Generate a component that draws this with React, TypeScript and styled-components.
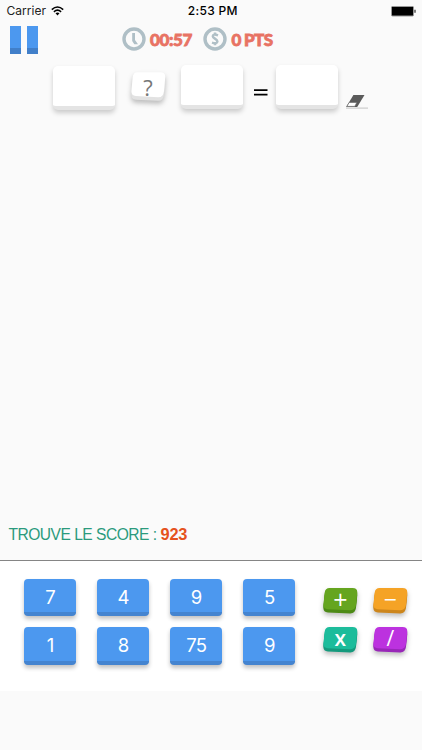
import React from 'react';
import styled, { createGlobalStyle } from 'styled-components';

const GlobalStyle = createGlobalStyle`
  * { box-sizing: border-box; }
  body { margin: 0; background: #fafafa; }
`;

const Screen = styled.main`
  display: flex;
  flex-direction: column;
  width: 422px;
  height: 750px;
  padding-bottom: 59px;
  overflow: hidden;
  background: #fafafa;
  font-family: 'Liberation Sans', sans-serif;
`;

const StatusBar = styled.header`
  display: grid;
  grid-template-columns: 1fr auto 1fr;
  align-items: center;
  height: 22px;
  padding: 0 6px 0 6.5px;
  color: #222;
  font: 400 12px/22px Inter, sans-serif;
`;

const Carrier = styled.div`
  display: flex;
  align-items: center;
  gap: 4.5px;
  letter-spacing: 0.05px;
`;

const Time = styled.time`
  padding-left: 3px;
  font-weight: 500;
  letter-spacing: 0.3px;
  color: #000;
`;

const Battery = styled.svg`
  justify-self: end;
`;

const Hud = styled.section`
  display: flex;
  align-items: flex-start;
  height: 38px;
  padding: 4px 0 0 9.5px;
`;

const PauseButton = styled.button`
  display: flex;
  gap: 6.5px;
  width: 29px;
  margin: 0 83px 0 0;
  padding: 0;
  border: 0;
  background: none;
`;

const PauseBar = styled.span`
  width: 11px;
  height: 28px;
  background: #4c98ef;
  border-bottom: 6px solid #417fc9;
`;

const Stat = styled.div<{ $width: number }>`
  display: flex;
  align-items: center;
  gap: 4.5px;
  width: ${({ $width }) => $width}px;
  height: 26px;
  color: #e87364;
`;

const StatIcon = styled.svg`
  flex: none;
`;

const StatText = styled.span<{ $spacing: number }>`
  padding-top: 2px;
  font: 900 17px/26px Lato, sans-serif;
  letter-spacing: ${({ $spacing }) => $spacing}px;
  -webkit-text-stroke: 0.8px #e87364;
  white-space: nowrap;
`;

const Equation = styled.section`
  display: flex;
  align-items: flex-start;
  height: 60px;
  padding: 5px 0 0 53px;
`;

const Slot = styled.div<{ $raise?: number }>`
  width: 61.5px;
  height: 44px;
  margin-top: ${({ $raise = 0 }) => 0.5 - $raise}px;
  border-radius: 5px;
  border-bottom: 4px solid #e4e4e4;
  background: #fff;
  box-shadow: 0 3px 5px rgba(0, 0, 0, 0.19);
`;

const OperatorSlot = styled.div`
  margin: 6px 13px 0 15.5px;
`;

const EqualSign = styled.svg`
  margin: 24px 8px 0 11.5px;
`;

const Eraser = styled.svg`
  margin: 29px 0 0 7.5px;
`;

const Board = styled.section`
  flex: 1;
`;

const Goal = styled.p`
  display: flex;
  height: 40px;
  margin: 0;
  padding-left: 8.5px;
  color: #2b9a7d;
  font-size: 15.6px;
  line-height: 29px;
  letter-spacing: -0.52px;
  white-space: pre;
`;

const GoalValue = styled.strong`
  margin-left: 4px;
  color: #e5521d;
  font-size: 16.4px;
  letter-spacing: -0.2px;
`;

const Panel = styled.section`
  display: flex;
  height: 131px;
  padding: 17.5px 0 0 24px;
  border-top: 1px solid #858585;
  background: #fff;
`;

const NumberGrid = styled.div`
  display: grid;
  grid-template-columns: repeat(4, 52px);
  grid-auto-rows: 37.5px;
  gap: 11px 21.1px;
  margin-right: 27px;
`;

const NumberKey = styled.button`
  padding: 3px 0 0;
  border: 0;
  border-radius: 4px;
  border-bottom: 4px solid #4484d0;
  background: #4c98ef;
  box-shadow: 0 3px 4px rgba(0, 0, 0, 0.24);
  color: #fff;
  font: 400 18.5px/30px Inter, sans-serif;
  letter-spacing: -0.8px;
`;

const OperatorGrid = styled.div`
  display: grid;
  grid-template-columns: repeat(2, 38px);
  grid-auto-rows: 33px;
  gap: 6px 12px;
  padding-top: 8px;
`;

const Tile = styled.span`
  display: grid;
  width: 38px;
  height: 33px;
`;

const TileShape = styled.svg`
  grid-area: 1 / 1;
  overflow: visible;
  filter: drop-shadow(0 3px 2.5px rgba(0, 0, 0, 0.25));
`;

const TileLabel = styled.span<{ $color: string; $size: number; $shift: number; $weight: number }>`
  grid-area: 1 / 1;
  z-index: 1;
  width: 36px;
  padding-top: ${({ $shift }) => $shift}px;
  color: ${({ $color }) => $color};
  font: ${({ $weight }) => $weight} ${({ $size }) => $size}px/24px 'Open Sans', sans-serif;
  text-align: center;
`;

const OperatorButton = styled.button`
  padding: 0;
  border: 0;
  background: none;
`;

interface SkewTileProps {
  label: string;
  face: string;
  edge: string;
  ink?: string;
  size?: number;
  shift?: number;
  stretch?: number;
  weight?: number;
}

function SkewTile({ label, face, edge, ink = '#fff', size = 23, shift = 0, stretch = 1, weight = 400 }: SkewTileProps) {
  const outline = 'M7.6 1H30.6Q35.8 1 35.2 6L34 17.6Q33.3 23.3 28.2 23.2L5.8 22.2Q.9 21.9 1.5 17L2.7 5.6Q3.2 1 7.6 1Z';
  return (
    <Tile>
      <TileShape width="38" height="33" viewBox="0 0 38 33" aria-hidden="true">
        <g transform={`scale(1 ${stretch})`}>
          <path d={outline} fill={edge} transform="translate(0 3.2)" />
          <path d={outline} fill={edge} transform="translate(0 1.5)" />
          <path d={outline} fill={face} />
        </g>
      </TileShape>
      <TileLabel $color={ink} $size={size} $shift={shift} $weight={weight}>{label}</TileLabel>
    </Tile>
  );
}

const numbers = [7, 4, 9, 5, 1, 8, 75, 9];
const operators: SkewTileProps[] = [
  { label: '+', face: '#65a51f', edge: '#4d8a16', size: 25 },
  { label: '−', face: '#f5a326', edge: '#cd861c', size: 23 },
  { label: 'x', face: '#1cbc9b', edge: '#159a7d', size: 21, shift: -2, weight: 600 },
  { label: '/', face: '#bc32df', edge: '#9927b8', size: 21, shift: 0.5 },
];

export default function App() {
  return (
    <>
      <GlobalStyle />
      <Screen>
        <StatusBar>
          <Carrier>
            Carrier
            <svg width="13" height="10" viewBox="0 0 13 10" aria-label="Wi-Fi">
              <g fill="none" stroke="#000" strokeWidth="1.6">
                <path d="M.8 3.6Q6.5-1.6 12.2 3.6" />
                <path d="M2.9 5.8Q6.5 2.6 10.1 5.8" />
              </g>
              <path d="M4.5 7.3Q6.5 5.7 8.5 7.3L6.5 9.5Z" />
            </svg>
          </Carrier>
          <Time>2:53 PM</Time>
          <Battery width="25" height="11" viewBox="0 0 25 11" aria-label="Battery">
            <rect x=".5" y=".5" width="22" height="9.5" rx="1" fill="#000" stroke="#999" />
            <path d="M23.5 3.8h1v3h-1z" />
          </Battery>
        </StatusBar>
        <Hud>
          <PauseButton aria-label="Pause">
            <PauseBar />
            <PauseBar />
          </PauseButton>
          <Stat $width={81.5}>
            <StatIcon width="24" height="24" viewBox="0 0 24 24" aria-hidden="true">
              <circle cx="12" cy="12" r="10" fill="none" stroke="#afbfc6" strokeWidth="3.4" />
              <path d="M10.2 6H13v7l3 4.3h-3.7L10.2 14Z" fill="#afbfc6" />
            </StatIcon>
            <StatText $spacing={-0.35}>00:57</StatText>
          </Stat>
          <Stat $width={80}>
            <StatIcon width="24" height="24" viewBox="0 0 24 24" aria-hidden="true">
              <circle cx="12" cy="12" r="10" fill="none" stroke="#afbfc6" strokeWidth="3.4" />
              <path d="M15 8.4Q9.8 6.4 9.8 9.3C9.8 11.4 14.4 11.8 14.4 14.4Q14.2 17.2 9 15.6M12 5.6v2M12 16.2v2" fill="none" stroke="#afbfc6" strokeWidth="2.5" />
            </StatIcon>
            <StatText $spacing={-0.65}>0 PTS</StatText>
          </Stat>
        </Hud>
        <Equation>
          <Slot />
          <OperatorSlot>
            <SkewTile label="?" face="#fff" edge="#e2e2e2" ink="#777" size={22} shift={3.5} stretch={1.13} />
          </OperatorSlot>
          <Slot $raise={0.5} />
          <EqualSign width="14" height="7" viewBox="0 0 14 7" aria-label="=">
            <path d="M0 1.2h13.5M0 5.6h13.5" stroke="#000" strokeWidth="1.7" />
          </EqualSign>
          <Slot $raise={0.5} />
          <Eraser width="24" height="15" viewBox="0 0 24 15" aria-label="Effacer">
            <path d="M8.4 1H19.5L12.2 13H1.2Z" fill="#5b5b5b" />
            <path d="M4.2 8.4H11.8L9.8 12.4H1.8Z" fill="#fff" stroke="#5b5b5b" strokeWidth=".6" />
            <path d="M1 14.1H23" stroke="#bbb" strokeWidth=".9" />
          </Eraser>
        </Equation>
        <Board />
        <Goal>TROUVE LE SCORE :<GoalValue>923</GoalValue></Goal>
        <Panel>
          <NumberGrid>
            {numbers.map((value, index) => (
              <NumberKey key={index}>{value}</NumberKey>
            ))}
          </NumberGrid>
          <OperatorGrid>
            {operators.map((operator) => (
              <OperatorButton key={operator.label}>
                <SkewTile {...operator} />
              </OperatorButton>
            ))}
          </OperatorGrid>
        </Panel>
      </Screen>
    </>
  );
}
